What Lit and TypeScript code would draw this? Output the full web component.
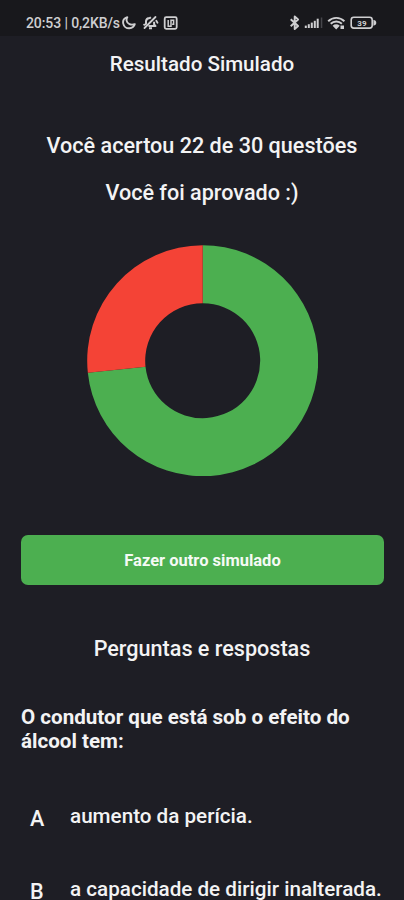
import { LitElement, html, css, svg } from "lit";
import { customElement, property } from "lit/decorators.js";

@customElement("status-bar")
class StatusBar extends LitElement {
  static styles = css`
    :host { display: flex; box-sizing: border-box; height: 36px; padding: 13px 27px 0 26px; background: #18181c; color: #cfcfd1; font-size: 14px; line-height: 20px; }
    .time { width: 95px; white-space: nowrap; letter-spacing: -0.1px; font-weight: 500; }
    svg { display: block; flex: none; fill: none; stroke: #cfcfd1; }
    .left { margin-left: 1px; }
    .right { margin-left: auto; }
    .digits { fill: #cfcfd1; stroke: none; font: 700 8px Roboto, sans-serif; }
    .solid { fill: #cfcfd1; stroke: none; }
    .dim { fill: #46464b; stroke: none; }
  `;
  render() {
    return html`
      <span class="time">20:53 | 0,2KB/s</span>
      <svg class="left" width="58" height="20" viewBox="122 13 58 20">
        <path stroke-width="1.9" stroke-linejoin="round" d="M127.300 17.200c-3 .9-4.600 3.200-4.100 6.100.5 3 3.100 5.100 6.100 5 2.700-.1 4.900-1.800 5.500-4.200-3.700 1.400-7.700-.1-8.200-3.400-.2-1.300.1-2.500.7-3.500z" />
        <path stroke-width="2" stroke-linejoin="round" d="M143.500 25.200l2.500-1.400v-2.600c.3-2 1.800-3 3.600-3.100l1.300-.9M148.500 26.100h7l-1.400-1.800v-2.500M149 28.300h3" />
        <path stroke-width="1.800" stroke-linecap="round" d="M144.500 28 155.500 17M156.300 20.800l1.200 1.900" />
        <rect x="164.700" y="17.200" width="12" height="11.600" rx="1.500" stroke-width="1.800" />
        <path stroke-width="1.500" d="M168.200 20v6.300h2.800v-6.100h2.600v4h-1.500" />
      </svg>
      <svg class="right" width="88" height="20" viewBox="289 13 88 20">
        <path stroke-width="1.900" stroke-linejoin="round" d="M290.700 19.200l7.400 6.800-3.400 3v-12.500l3.400 3-7.400 6.800" />
        <g class="solid">
          <rect x="304.800" y="25.600" width="2" height="2.400" />
          <rect x="307.800" y="24.200" width="2" height="3.800" />
          <rect x="310.800" y="22.600" width="2" height="5.400" />
          <rect x="313.800" y="20.800" width="2" height="7.200" />
          <rect x="316.700" y="18.700" width="2" height="9.300" />
        </g>
        <rect class="dim" x="320.800" y="17.500" width="1.500" height="10.500" />
        <path stroke-width="1.900" d="M328.200 21.200c4.600-4.400 11.600-4.400 16.200 0M330.700 23.800c3.200-3 8-3 11.200 0" />
        <path class="solid" d="M332.600 25.700c2.200-1.800 5-1.800 7.200 0l-3.600 3.700zM340.500 25.500h3.500v3.500h-3.500z" />
        <rect x="351.200" y="17.300" width="21" height="10.800" rx="2.600" stroke-width="1.600" />
        <path class="solid" d="M373.400 19.700c1.900.3 2.900 1.500 2.900 3s-1 2.700-2.900 3z" />
        <text class="digits" x="357.300" y="25.700">39</text>
      </svg>
    `;
  }
}

@customElement("donut-chart")
class DonutChart extends LitElement {
  @property({ type: Number }) correct = 0;
  @property({ type: Number }) total = 1;
  static styles = css`
    :host { display: block; }
    svg { display: block; }
    .right { fill: #4caf50; }
    .wrong { fill: #f44336; }
  `;
  private slice(from: number, to: number) {
    const c = 115.7, outer = 115.5, inner = 57.5;
    const at = (r: number, t: number) =>
      `${c + r * Math.sin(t * 2 * Math.PI)} ${c - r * Math.cos(t * 2 * Math.PI)}`;
    const large = to - from > 0.5 ? 1 : 0;
    return `M${at(outer, from)}A${outer} ${outer} 0 ${large} 1 ${at(outer, to)}L${at(inner, to)}A${inner} ${inner} 0 ${large} 0 ${at(inner, from)}Z`;
  }
  render() {
    const share = this.correct / this.total;
    return html`<svg width="231.400" height="231.400" viewBox="0 0 231.400 231.400">
      ${svg`<path class="right" d=${this.slice(0, share)} /><path class="wrong" d=${this.slice(share, 1)} />`}
    </svg>`;
  }
}

@customElement("app-root")
class AppRoot extends LitElement {
  static styles = css`
    :host { display: block; height: 900px; overflow: hidden; background: #1e1e25; color: #f3f3f4; font-family: Roboto, "Liberation Sans", sans-serif; font-size: 21.6px; font-weight: 500; line-height: 24px; }
    .title, .score, .verdict, .section { text-align: center; margin: 0; font-weight: 500; white-space: nowrap; }
    .title { margin-top: 16px; font-size: 20.6px; }
    .score { margin-top: 58px; font-size: 21.6px; }
    .verdict { margin-top: 23px; font-size: 21.6px; }
    .chart { margin: 40px 0 0 87px; }
    .again { display: block; box-sizing: border-box; width: 363px; height: 50px; margin: 59px 0 0 21px; padding: 1px 0 0; border: 0; border-radius: 7px; background: #4caf50; color: #f5faf5; font: 700 16.5px/49px Roboto, sans-serif; }
    .section { margin-top: 52px; font-size: 21.6px; }
    .question { margin: 44px 21px 0; font-size: 20.6px; font-weight: 700; white-space: nowrap; }
    .answers { list-style: none; margin: 51px 0 0; padding: 0 0 0 30px; display: grid; gap: 49px; font-size: 20.65px; }
    .answer { display: grid; grid-template-columns: 40px auto; white-space: nowrap; }
    .letter { padding-top: 3px; height: 21px; font-size: 21.6px; }
  `;
  private answers = ["aumento da perícia.", "a capacidade de dirigir inalterada."];
  render() {
    return html`
      <status-bar></status-bar>
      <h1 class="title">Resultado Simulado</h1>
      <p class="score">Você acertou 22 de 30 questões</p>
      <p class="verdict">Você foi aprovado :)</p>
      <donut-chart class="chart" correct="22" total="30"></donut-chart>
      <button class="again">Fazer outro simulado</button>
      <h2 class="section">Perguntas e respostas</h2>
      <p class="question">O condutor que está sob o efeito do<br />álcool tem:</p>
      <ul class="answers">
        ${this.answers.map((text, i) => html`<li class="answer"><span class="letter">${"ABCDE"[i]}</span><span>${text}</span></li>`)}
      </ul>
    `;
  }
}
